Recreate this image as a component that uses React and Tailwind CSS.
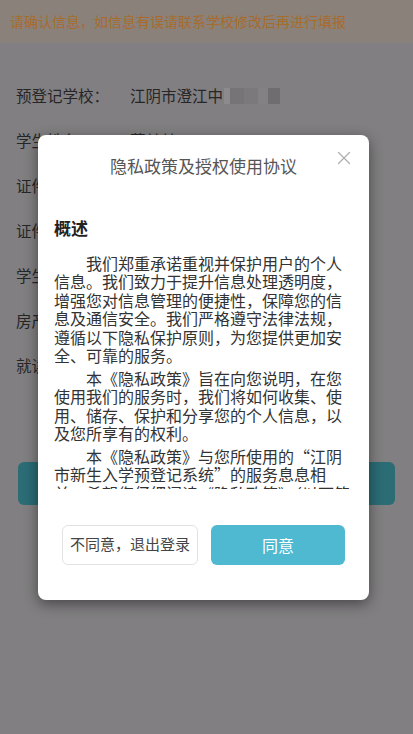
import { X } from 'lucide-react';

const rows = [
  { label: '预登记学校：', value: '江阴市澄江中', masked: true },
  { label: '学生姓名：', value: '蒋某某' },
  { label: '证件类型：', value: '居民身份证' },
  { label: '证件号码：', value: '3202**********' },
  { label: '学生性别：', value: '男' },
  { label: '房产信息：', value: '有' },
  { label: '就读幼儿园：', value: '澄江幼儿园' },
];

// mosaic blocks covering the rest of the school name
function Mosaic() {
  return (
    <span className="inline-flex h-[16px] ml-[1px] align-middle">
      <span className="w-[6px] bg-[#8c8a8c]" />
      <span className="w-[14px] bg-[#767476]" />
      <span className="w-[14px] bg-[#7b797b]" />
      <span className="w-[10px] bg-[#838183]" />
      <span className="w-[12px] bg-[#6f6d6f]" />
    </span>
  );
}

export default function App() {
  return (
    <div className="relative h-[734px] w-full overflow-hidden bg-[#817f81] font-['Noto_Sans_CJK_SC','Noto_Sans',sans-serif]">
      {/* page under the dialog (already dimmed) */}
      <div className="h-[43px] flex items-center px-[10px] bg-[#8b817b] border-b border-[#857f7d]">
        <p className="text-[14px] text-[#a86b2c] whitespace-nowrap">
          请确认信息，如信息有误请联系学校修改后再进行填报
        </p>
      </div>

      <div className="pt-[30px]">
        {rows.map((row) => (
          <div key={row.label} className="h-[45px] flex items-center text-[15.5px] text-[#272627]">
            <span className="w-[130px] pl-[16px]">{row.label}</span>
            <span className="flex items-center">
              {row.value}
              {row.masked && <Mosaic />}
            </span>
          </div>
        ))}
      </div>

      <div className="mx-[18px] mt-[74px] h-[43px] rounded-[6px] bg-[#2b6c75] flex items-center justify-center text-[16px] text-[#9fb9bc]">
        确认提交
      </div>

      {/* privacy dialog */}
      <div className="absolute inset-0 flex items-center pl-[38px]">
        <div className="w-[331px] h-[465px] bg-white rounded-[8px] shadow-[0_4px_14px_rgba(0,0,0,0.45)] flex flex-col">
          <div className="relative h-[60px] flex items-center justify-center pt-[2px]">
            <h2 className="text-[17px] text-[#555]">隐私政策及授权使用协议</h2>
            <button className="absolute right-[14px] top-[12px] text-[#b0b0b0]">
              <X size={22} strokeWidth={1.4} />
            </button>
          </div>

          <div className="h-[294px] overflow-y-auto px-[16px] pt-[20px] text-[16px] leading-[18.5px] text-[#333] [scrollbar-width:none]">
            <h3 className="text-[17px] font-bold text-[#222] leading-[25px] mb-[14px]">概述</h3>
            <p className="indent-[2em] mb-[4px]">
              我们郑重承诺重视并保护用户的个人信息。我们致力于提升信息处理透明度，增强您对信息管理的便捷性，保障您的信息及通信安全。我们严格遵守法律法规，遵循以下隐私保护原则，为您提供更加安全、可靠的服务。
            </p>
            <p className="indent-[2em] mb-[4px]">
              本《隐私政策》旨在向您说明，在您使用我们的服务时，我们将如何收集、使用、储存、保护和分享您的个人信息，以及您所享有的权利。
            </p>
            <p className="indent-[2em] mb-[4px]">
              本《隐私政策》与您所使用的“江阴市新生入学预登记系统”的服务息息相关，希望您仔细阅读《隐私政策》（以下简称“本政策”），并在需要时，按照本政策的指引，作出您认为适当的选择。
            </p>
          </div>

          <div className="flex gap-[13px] px-[24px] pt-[36px]">
            <button className="flex-1 h-[40px] rounded-[6px] border border-[#e2e2e2] bg-white text-[15px] text-[#444]">
              不同意，退出登录
            </button>
            <button className="flex-1 h-[40px] rounded-[6px] bg-[#4eb9d0] text-[16px] text-white">
              同意
            </button>
          </div>
        </div>
      </div>
    </div>
  );
}
